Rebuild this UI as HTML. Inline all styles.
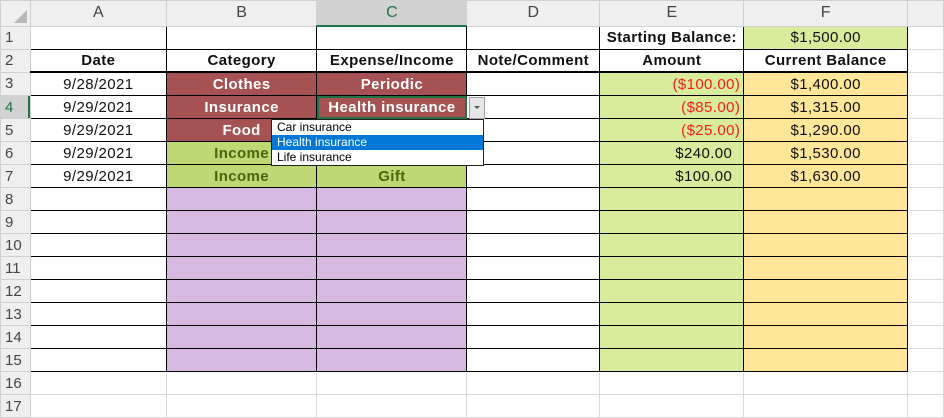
<!DOCTYPE html>
<html><head><meta charset="utf-8"><style>
html,body{margin:0;padding:0;background:#fff;width:944px;height:405px;overflow:hidden;font-family:"Liberation Sans","DejaVu Sans",sans-serif}
table{position:absolute;left:0;top:0;border-collapse:collapse;table-layout:fixed}
td{padding:0;height:22px;border:1px solid #d9d9d9;font-size:15px;text-align:center;white-space:nowrap;overflow:hidden;color:#111;letter-spacing:0.4px}
tr.h td{height:24px;background:#efefef;color:#444;border-color:#d0d0d0;font-size:16px;letter-spacing:0}
tr.r2 td{height:21px}
td.rh{background:#efefef;color:#444;text-align:left;padding-left:4px;border-color:#d0d0d0;letter-spacing:0;font-size:15px}
td.b{border:1px solid #000}
td.bb{border-bottom:2px solid #000}
td.bold{font-weight:bold}
.red{background:repeating-conic-gradient(#5a1515 0 25%,#f29090 0 50%) 0 0/2px 2px;color:#fff;font-weight:bold}
.grn{background:#bdd874;color:#4a6410;font-weight:bold}
.pur{background:#d7b9e1}
.e{background:#d8ec9c;text-align:right}
.f{background:#ffe699}
.neg{color:#ff1a1a;padding-right:3px}
.pos{padding-right:11px}
</style></head><body>
<table>
<colgroup><col style="width:30px"><col style="width:136px"><col style="width:151px"><col style="width:150px"><col style="width:133px"><col style="width:144px"><col style="width:164px"><col style="width:36px"></colgroup>
<tr class="h"><td style="position:relative"><div style="position:absolute;right:3px;bottom:3px;width:0;height:0;border-left:13px solid transparent;border-bottom:13px solid #b8b8b8"></div></td><td>A</td><td>B</td><td style="background:#d2d2d2;color:#217346;border-bottom:2px solid #217346">C</td><td>D</td><td>E</td><td>F</td><td></td></tr>
<tr><td class="rh">1</td><td class="b"></td><td class="b"></td><td class="b"></td><td class="b"></td><td class="b bold">Starting Balance:</td><td class="b" style="background:#d8ec9c">$1,500.00</td><td></td></tr>
<tr class="r2"><td class="rh">2</td><td class="b bb bold">Date</td><td class="b bb bold">Category</td><td class="b bb bold">Expense/Income</td><td class="b bb bold">Note/Comment</td><td class="b bb bold">Amount</td><td class="b bb bold">Current Balance</td><td></td></tr>
<tr><td class="rh">3</td><td class="b">9/28/2021</td><td class="b red">Clothes</td><td class="b red">Periodic</td><td class="b"></td><td class="b e neg">($100.00)</td><td class="b f">$1,400.00</td><td></td></tr>
<tr><td class="rh" style="background:#d2d2d2;color:#217346;box-shadow:inset -2px 0 #217346">4</td><td class="b">9/29/2021</td><td class="b red">Insurance</td><td class="b red" style="outline:2px solid #217346;outline-offset:-2px">Health insurance</td><td class="b"></td><td class="b e neg">($85.00)</td><td class="b f">$1,315.00</td><td></td></tr>
<tr><td class="rh">5</td><td class="b">9/29/2021</td><td class="b red">Food</td><td class="b red"></td><td class="b"></td><td class="b e neg">($25.00)</td><td class="b f">$1,290.00</td><td></td></tr>
<tr><td class="rh">6</td><td class="b">9/29/2021</td><td class="b grn">Income</td><td class="b grn"></td><td class="b"></td><td class="b e pos">$240.00</td><td class="b f">$1,530.00</td><td></td></tr>
<tr><td class="rh">7</td><td class="b">9/29/2021</td><td class="b grn">Income</td><td class="b grn">Gift</td><td class="b"></td><td class="b e pos">$100.00</td><td class="b f">$1,630.00</td><td></td></tr>
<tr><td class="rh">8</td><td class="b"></td><td class="b pur"></td><td class="b pur"></td><td class="b"></td><td class="b e"></td><td class="b f"></td><td></td></tr>
<tr><td class="rh">9</td><td class="b"></td><td class="b pur"></td><td class="b pur"></td><td class="b"></td><td class="b e"></td><td class="b f"></td><td></td></tr>
<tr><td class="rh">10</td><td class="b"></td><td class="b pur"></td><td class="b pur"></td><td class="b"></td><td class="b e"></td><td class="b f"></td><td></td></tr>
<tr><td class="rh">11</td><td class="b"></td><td class="b pur"></td><td class="b pur"></td><td class="b"></td><td class="b e"></td><td class="b f"></td><td></td></tr>
<tr><td class="rh">12</td><td class="b"></td><td class="b pur"></td><td class="b pur"></td><td class="b"></td><td class="b e"></td><td class="b f"></td><td></td></tr>
<tr><td class="rh">13</td><td class="b"></td><td class="b pur"></td><td class="b pur"></td><td class="b"></td><td class="b e"></td><td class="b f"></td><td></td></tr>
<tr><td class="rh">14</td><td class="b"></td><td class="b pur"></td><td class="b pur"></td><td class="b"></td><td class="b e"></td><td class="b f"></td><td></td></tr>
<tr><td class="rh">15</td><td class="b"></td><td class="b pur"></td><td class="b pur"></td><td class="b"></td><td class="b e"></td><td class="b f"></td><td></td></tr>
<tr><td class="rh">16</td><td></td><td></td><td></td><td></td><td></td><td></td><td></td></tr>
<tr><td class="rh">17</td><td></td><td></td><td></td><td></td><td></td><td></td><td></td></tr>
</table>
<div style="position:absolute;left:469px;top:97px;width:14px;height:20px;background:#e6e6e6;border:1px solid #a0a0a0"><div style="position:absolute;left:4px;top:8px;width:0;height:0;border-left:3px solid transparent;border-right:3px solid transparent;border-top:3px solid #555"></div></div>
<div style="position:absolute;left:271px;top:119px;width:211px;height:45px;background:#fff;border:1px solid #222;font-size:12px;color:#000;line-height:15px">
<div style="padding-left:5px">Car insurance</div>
<div style="padding-left:5px;background:#0078d7;color:#fff">Health insurance</div>
<div style="padding-left:5px">Life insurance</div>
</div>
</body></html>
